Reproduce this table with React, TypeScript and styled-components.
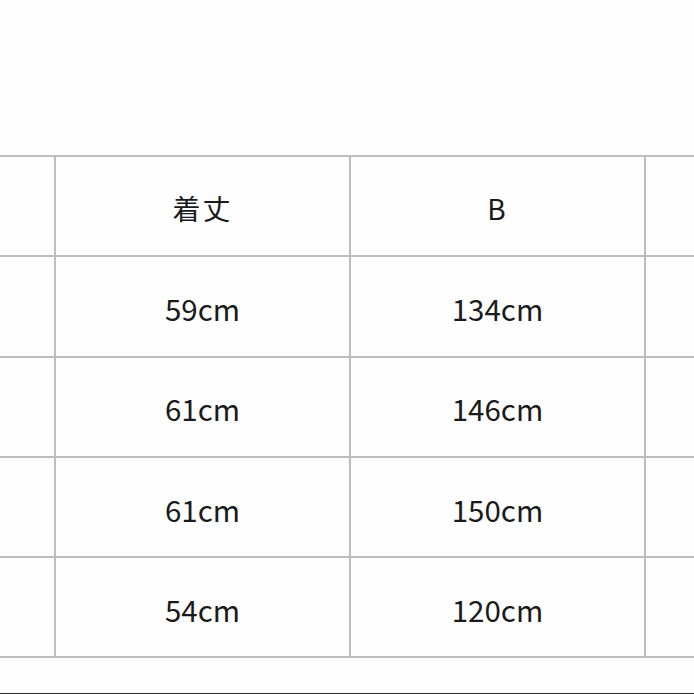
import React from "react";
import styled, { createGlobalStyle } from "styled-components";

const GlobalStyle = createGlobalStyle`
  html, body {
    margin: 0;
    padding: 0;
    background: #fefefe;
    overflow: hidden;
  }
  body {
    font-family: "Noto Sans CJK JP", "Noto Sans", sans-serif;
  }
`;

const Page = styled.div`
  width: 694px;
  height: 694px;
  box-sizing: border-box;
  border-bottom: 1px solid #2a2a2a;
  overflow: hidden;
  padding-top: 155px;
`;

const Grid = styled.div`
  display: grid;
  grid-template-columns: repeat(4, 293px);
  grid-auto-rows: 98.3px;
  gap: 2px;
  width: max-content;
  margin-left: -241px;
  padding: 2px;
  background: #bdbdbd;
`;

const Cell = styled.div<{ $head?: boolean }>`
  display: flex;
  align-items: center;
  justify-content: center;
  background: #fefefe;
  color: #1a1a1a;
  font-size: ${(p) => (p.$head ? "28px" : "29.5px")};
  letter-spacing: ${(p) => (p.$head ? "2px" : "0")};
  padding-top: 3px;
  box-sizing: border-box;
`;

const rows = [
  ["59cm", "134cm"],
  ["61cm", "146cm"],
  ["61cm", "150cm"],
  ["54cm", "120cm"],
];

const App = () => {
  return (
    <>
      <GlobalStyle />
      <Page>
        <Grid>
          <Cell $head />
          <Cell $head>着丈</Cell>
          <Cell $head>B</Cell>
          <Cell $head />
          {rows.map((row, index) => (
            <React.Fragment key={index}>
              <Cell />
              <Cell>{row[0]}</Cell>
              <Cell>{row[1]}</Cell>
              <Cell />
            </React.Fragment>
          ))}
        </Grid>
      </Page>
    </>
  );
};

export default App;
